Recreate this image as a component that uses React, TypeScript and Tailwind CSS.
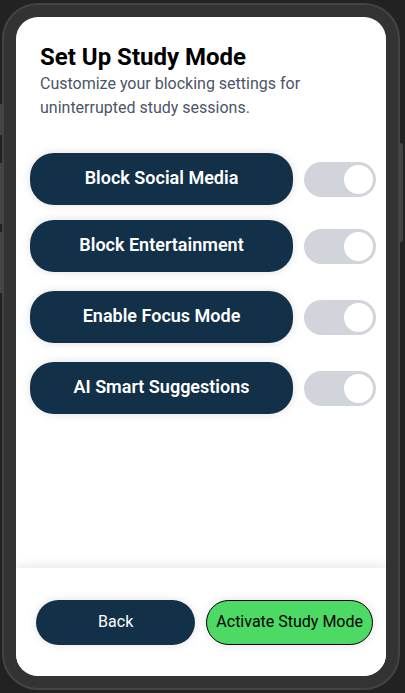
import { useState } from "react";

const settings = [
  { id: "social", label: "Block Social Media", gap: "" },
  { id: "entertainment", label: "Block Entertainment", gap: "mt-[15px]" },
  { id: "focus", label: "Enable Focus Mode", gap: "mt-[19px]" },
  { id: "suggestions", label: "AI Smart Suggestions", gap: "mt-[19px]" },
];

function SettingRow({ id, label, gap }: { id: string; label: string; gap: string }) {
  const [on, setOn] = useState(true);
  return (
    <div className={`flex items-center gap-[11px] ${gap}`}>
      <button
        id={id}
        type="button"
        onClick={() => setOn(!on)}
        className="h-[52px] min-w-0 flex-1 rounded-3xl bg-[#123048] pb-0.5 text-lg font-semibold text-white shadow-[0_0_10px_rgba(0,0,0,0.12)]"
      >
        {label}
      </button>
      <span className="relative flex shrink-0">
        <input
          type="checkbox"
          aria-labelledby={id}
          checked={on}
          onChange={() => setOn(!on)}
          className="peer h-[35px] w-[72px] cursor-pointer appearance-none rounded-full bg-[#d1d5db]"
        />
        <span className="pointer-events-none absolute top-[3px] left-[3px] size-[29px] rounded-full bg-white peer-checked:left-10" />
      </span>
    </div>
  );
}

export default function App() {
  return (
    <div className="flex h-screen bg-[#222] pt-[3px] pr-[5px] pb-[3px] pl-[2px] font-['Roboto','Liberation_Sans',sans-serif]">
      <div className="relative flex min-w-0 flex-1 rounded-[36px] border-2 border-[#444] bg-[#333] p-3">
        {/* Hardware keys on the sides of the handset */}
        <span className="absolute top-[99px] -left-1 h-[31px] w-0.5 bg-[#444]" />
        <span className="absolute top-[158px] -left-1 h-[61px] w-0.5 bg-[#444]" />
        <span className="absolute top-[227px] -left-1 h-[61px] w-0.5 bg-[#444]" />
        <span className="absolute top-[138px] -right-[5px] h-[99px] w-[3px] rounded-r-sm bg-[#444]" />

        <main className="flex min-w-0 flex-1 flex-col overflow-hidden rounded-[22px] bg-white">
          <header className="px-6 pt-6">
            <h1 className="text-2xl font-bold text-black">Set Up Study Mode</h1>
            <p className="-mt-px text-base text-[#4a5568]">
              Customize your blocking settings for uninterrupted study sessions.
            </p>
          </header>
          <section className="mt-[33px] flex-1 pr-2.5 pl-3.5">
            {settings.map((item) => (
              <SettingRow key={item.id} {...item} />
            ))}
          </section>
          <footer className="flex gap-[11px] bg-white pt-8 pr-[13px] pb-[31px] pl-5 shadow-[0_-2px_10px_rgba(0,0,0,0.1)]">
            <button
              type="button"
              className="h-[45px] min-w-0 flex-1 rounded-full bg-[#123048] pb-0.5 text-base text-white shadow-[0_0_10px_rgba(0,0,0,0.12)]"
            >
              Back
            </button>
            <button
              type="button"
              className="h-[45px] shrink-0 rounded-full border border-black bg-[#4cd964] px-[9px] pb-0.5 text-base text-black shadow-[0_0_10px_rgba(0,0,0,0.12)]"
            >
              Activate Study Mode
            </button>
          </footer>
        </main>
      </div>
    </div>
  );
}
